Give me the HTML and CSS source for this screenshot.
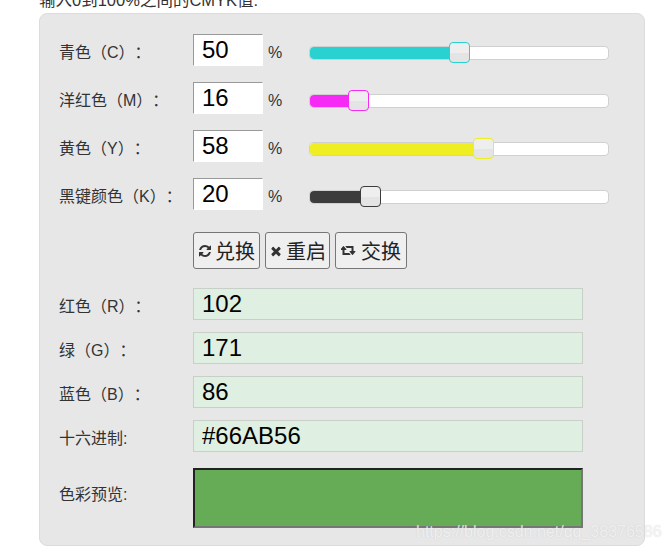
FILE: index.html
```html
<!DOCTYPE html>
<html lang="zh">
<head>
    <meta charset="UTF-8">
    <meta name="viewport" content="width=device-width, initial-scale=1.0">
    <title>CMYK转RGB</title>
    <link rel="stylesheet" href="styles.css">
</head>
<body>
    <p class="intro">输入0到100%之间的CMYK值:</p>
    <div class="panel">
        <div class="row">
            <label class="row-label">青色（C）：</label>
            <input class="num" type="text" value="50">
            <span class="unit">%</span>
            <div class="slider">
                <div class="fill fill-c" style="width: 50%"></div>
                <div class="thumb thumb-c" style="left: 50%"></div>
            </div>
        </div>
        <div class="row">
            <label class="row-label">洋红色（M）：</label>
            <input class="num" type="text" value="16">
            <span class="unit">%</span>
            <div class="slider">
                <div class="fill fill-m" style="width: 16%"></div>
                <div class="thumb thumb-m" style="left: 16%"></div>
            </div>
        </div>
        <div class="row">
            <label class="row-label">黄色（Y）：</label>
            <input class="num" type="text" value="58">
            <span class="unit">%</span>
            <div class="slider">
                <div class="fill fill-y" style="width: 58%"></div>
                <div class="thumb thumb-y" style="left: 58%"></div>
            </div>
        </div>
        <div class="row">
            <label class="row-label">黑键颜色（K）：</label>
            <input class="num" type="text" value="20">
            <span class="unit">%</span>
            <div class="slider">
                <div class="fill fill-k" style="width: 20%"></div>
                <div class="thumb thumb-k" style="left: 20%"></div>
            </div>
        </div>

        <div class="buttons">
            <button class="btn btn-convert">
                <svg class="icon" viewBox="0 0 1792 1792"><path d="M1639 1056q0 5-1 7-64 268-268 434.5t-478 166.5q-146 0-282.5-55t-243.5-157l-129 129q-19 19-45 19t-45-19-19-45v-448q0-26 19-45t45-19h448q26 0 45 19t19 45-19 45l-137 137q71 66 161 102t187 36q134 0 250-65t186-179q11-17 53-117 8-23 30-23h192q13 0 22.5 9.5t9.5 22.5zm25-800v448q0 26-19 45t-45 19h-448q-26 0-45-19t-19-45 19-45l138-138q-148-137-349-137-134 0-250 65t-186 179q-11 17-53 117-8 23-30 23h-199q-13 0-22.5-9.5t-9.5-22.5v-7q65-268 270-434.5t480-166.5q146 0 284 55.5t245 156.5l130-129q19-19 45-19t45 19 19 45z"/></svg>
                兑换
            </button>
            <button class="btn btn-reset">
                <svg class="icon" viewBox="0 0 1792 1792"><path d="M1490 1322q0 40-28 68l-136 136q-28 28-68 28t-68-28l-294-294-294 294q-28 28-68 28t-68-28l-136-136q-28-28-28-68t28-68l294-294-294-294q-28-28-28-68t28-68l136-136q28-28 68-28t68 28l294 294 294-294q28-28 68-28t68 28l136 136q28 28 28 68t-28 68l-294 294 294 294q28 28 28 68z"/></svg>
                重启
            </button>
            <button class="btn btn-swap">
                <svg class="icon icon-wide" viewBox="0 0 1920 1792"><path d="M1216 1376q0 13-9.5 22.5t-22.5 9.5h-960q-8 0-13.5-2t-9-7-5.5-8-3-11.5-1-11.5v-600h-192q-26 0-45-19t-19-45q0-24 15-41l320-384q19-22 49-22t49 22l320 384q15 17 15 41 0 26-19 45t-45 19h-192v384h576q16 0 25 11l160 192q7 11 7 21zm640-416q0 24-15 41l-320 384q-20 23-49 23t-49-23l-320-384q-15-17-15-41 0-26 19-45t45-19h192v-384h-576q-16 0-25-12l-160-192q-7-9-7-20 0-13 9.5-22.5t22.5-9.5h960q8 0 13.5 2t9 7 5.5 8 3 11.5 1 11.5v600h192q26 0 45 19t19 45z"/></svg>
                交换
            </button>
        </div>

        <div class="row row-out">
            <label class="row-label">红色（R）：</label>
            <input class="out" type="text" value="102">
        </div>
        <div class="row row-out">
            <label class="row-label">绿（G）：</label>
            <input class="out" type="text" value="171">
        </div>
        <div class="row row-out">
            <label class="row-label">蓝色（B）：</label>
            <input class="out" type="text" value="86">
        </div>
        <div class="row row-out">
            <label class="row-label">十六进制:</label>
            <input class="out" type="text" value="#66AB56">
        </div>
        <div class="row row-preview">
            <label class="row-label label-preview">色彩预览:</label>
            <div class="preview"></div>
        </div>
    </div>
    <div class="watermark">https://blog.csdn.net/qq_38376586</div>
</body>
</html>
```

FILE: styles.css
```css
* {
    box-sizing: border-box;
}

html, body {
    margin: 0;
    height: 100%;
    overflow: hidden;
}

body {
    position: relative;
    padding-left: 39px;
    background: #fff;
    color: #333;
    font-family: "Liberation Sans", "Noto Sans CJK SC", sans-serif;
    font-size: 16px;
    text-spacing-trim: space-all;
}

.intro {
    height: 13px;
    margin: 0;
    line-height: 0;
    font-size: 16.5px;
}

.panel {
    width: 606px;
    height: 533px;
    padding: 20px 20px 17px 19px;
    background: #e7e7e7;
    border: 1px solid #dcdcdc;
    border-radius: 8px;
}

.row {
    display: flex;
    align-items: center;
    height: 32px;
    margin-bottom: 16px;
}

.row-out {
    margin-bottom: 12px;
}

.row-label {
    flex: none;
    width: 134px;
    padding-top: 2px;
}

.label-preview {
    padding: 0 0 10px;
}

.num, .out {
    height: 32px;
    padding: 0 8px;
    font-family: inherit;
    font-size: 24px;
    color: #000;
    outline: none;
}

.num {
    width: 70px;
    background: #fff;
    border: 1px solid #fff;
    border-top-color: #999;
    border-left-color: #999;
}

.unit {
    width: 46px;
    padding: 6px 0 0 5px;
}

.slider {
    position: relative;
    width: 300px;
    height: 14px;
    margin-top: 6px;
    background: #fff;
    border: 1px solid #d0d0d0;
    border-radius: 4px;
}

.fill {
    height: 100%;
    border-radius: 4px 0 0 4px;
}

.fill-c { background: #2ad1d1; }
.fill-m { background: #f52af5; }
.fill-y { background: #eeee22; }
.fill-k { background: #3c3c3c; }

.thumb {
    position: absolute;
    top: -5px;
    width: 21px;
    height: 21px;
    margin-left: -10px;
    background: linear-gradient(#eeeeee 55%, #e4e4e4 55%);
    border: 1px solid #444;
    border-radius: 4px;
}

.thumb-c { border-color: #2ad1d1; }
.thumb-m { border-color: #f52af5; }
.thumb-y { border-color: #eeee22; }
.thumb-k { border-color: #3c3c3c; }

.buttons {
    display: flex;
    gap: 5px;
    height: 37px;
    margin: 22px 0 19px 134px;
}

.btn {
    display: flex;
    align-items: center;
    justify-content: center;
    gap: 3px;
    padding: 0;
    font-family: inherit;
    font-size: 20px;
    color: #222;
    background: #efefef;
    border: 1px solid #767676;
    border-radius: 3px;
}

.btn-convert { width: 67px; }
.btn-reset { width: 65px; }
.btn-swap { width: 72px; gap: 5px; }

.icon {
    width: 14px;
    height: 14px;
    fill: #333;
}

.icon-wide {
    width: 15px;
}

.out {
    width: 390px;
    background: #dfefe1;
    border: 1px solid #c8cfc8;
}

.row-preview {
    height: 60px;
    margin: 16px 0 0;
}

.preview {
    width: 390px;
    height: 60px;
    background: #66ab56;
    border: 2px solid #222;
    border-right-color: #767676;
    border-bottom-color: #767676;
}

.watermark {
    position: absolute;
    top: 523px;
    left: 416px;
    font-size: 16px;
    color: rgba(255, 255, 255, 0.7);
    text-shadow: 0 0 1px rgba(170, 170, 170, 0.5);
}
```
